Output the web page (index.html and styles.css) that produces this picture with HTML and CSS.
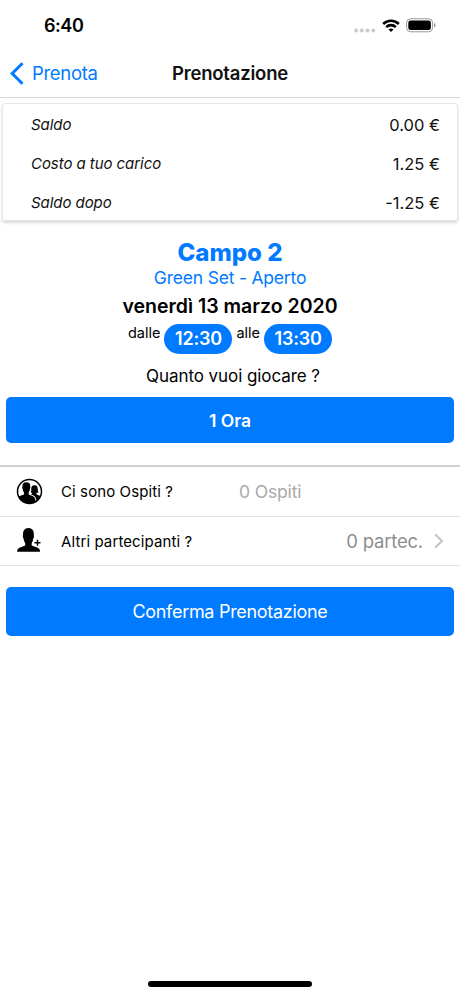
FILE: index.html
```html
<!DOCTYPE html>
<html lang="it">
<head>
<meta charset="utf-8">
<title>Prenotazione</title>
<link rel="stylesheet" href="styles.css">
</head>
<body>
<header class="status">
  <span class="clock">6:40</span>
  <div class="status-icons">
    <svg class="signal" width="22" height="5" viewBox="0 0 22 5" fill="#cbcbcb"><circle cx="2.1" cy="2.5" r="2"/><circle cx="7.8" cy="2.5" r="2"/><circle cx="13.5" cy="2.5" r="2"/><circle cx="19.2" cy="2.5" r="2"/></svg>
    <svg class="wifi" width="18" height="14" viewBox="0 0 18 14" fill="none" stroke="#000" stroke-width="2.6"><path d="M1.2 5C5.5.6 12.500.6 16.800 5"/><path d="M4.200 8.100C6.800 5.500 11.200 5.500 13.800 8.100"/><path d="M9 13L6.500 10.500Q9 8.400 11.500 10.500Z" fill="#000" stroke="none"/></svg>
    <svg class="battery" width="30" height="15" viewBox="0 0 30 15"><rect x=".6" y=".8" width="26" height="13" rx="4" fill="none" stroke="#999" stroke-width="1"/><rect x="2.300" y="2.500" width="22.600" height="9.600" rx="2.300"/><path d="M28 5v4.600q1.600-.6 1.600-2.300T28 5" fill="#999"/></svg>
  </div>
</header>
<nav class="nav">
  <a class="back"><svg width="14" height="23" viewBox="0 0 14 23" fill="none" stroke="#007aff" stroke-width="3"><path d="M12.500 1.200L2.200 11.500L12.500 21.800"/></svg><span class="back-text">Prenota</span></a>
  <h1 class="title">Prenotazione</h1>
</nav>
<main>
  <section class="card">
    <div class="line"><em>Saldo</em><span>0.00 €</span></div>
    <div class="line"><em>Costo a tuo carico</em><span>1.25 €</span></div>
    <div class="line"><em>Saldo dopo</em><span>-1.25 €</span></div>
  </section>
  <section class="summary">
    <h2 class="court">Campo 2</h2>
    <p class="surface">Green Set - Aperto</p>
    <p class="date">venerdì 13 marzo 2020</p>
    <div class="times"><span class="word">dalle</span><b class="pill">12:30</b><span class="word">alle</span><b class="pill">13:30</b></div>
    <p class="question">Quanto vuoi giocare ?</p>
  </section>
  <button class="btn duration">1 Ora</button>
  <section class="list">
    <div class="item">
      <svg class="icon" width="28" height="28" viewBox="0 0 28 28"><circle cx="14.500" cy="13.400" r="12" fill="#fff" stroke="#000" stroke-width="1.500"/><path d="M3.300 18.500Q6 17.300 9 16.400V14.500Q7.800 13.200 7.700 11Q6.900 9.800 7.400 8.500Q7.200 4.300 11.400 4.300Q15.500 4.300 15.200 8.500Q15.700 9.800 14.900 11.200Q14.700 13.200 13.700 14.500V16.400L18 18.200Q20.500 19.500 20.500 23.600Q14.500 27.500 8 23.900Q4.500 21.900 3.300 18.500Z"/><path d="M15.500 16.300Q17 16 17.200 14.900L15.600 14.400Q16.500 13.300 16.300 10.500Q16.500 7.100 19.400 7.200Q22.400 7 22.700 10.500Q22.700 13.300 23.600 14.400L21.400 14.900V16.200L25.400 18Q24 21.600 21.500 23.200Q21 18.900 18.500 17.600Z"/></svg>
      <span class="label">Ci sono Ospiti ?</span><span class="guests">0 Ospiti</span>
    </div>
    <div class="item second">
      <svg class="icon" width="28" height="28" viewBox="0 0 28 28"><path d="M2 24.700Q2 21.600 4.500 20.800L10.200 18.400V16.200Q8.800 14.500 8.600 11.800Q7.500 10.500 7.900 8.500Q7.400 1.300 13.400 1Q19.400 1.200 18.900 8.500Q19.300 10.500 18.200 11.800Q18 14.500 16.700 16.200V18.400L22.700 20.800Q25.200 21.700 25.200 24.700Z"/><path d="M22.500 12.800v6M19.500 15.800h6" stroke="#000" stroke-width="1.400"/></svg>
      <span class="label">Altri partecipanti ?</span><span class="partners">0 partec.</span>
      <svg class="chevron" width="10" height="16" viewBox="0 0 10 16" fill="none" stroke="#c4c4c6" stroke-width="2"><path d="M1.200 1.200L8 8L1.200 14.800"/></svg>
    </div>
  </section>
  <button class="btn confirm">Conferma Prenotazione</button>
</main>
<footer class="home"></footer>
</body>
</html>
```

FILE: styles.css
```css
* { box-sizing: border-box; }
body { margin: 0; width: 460px; height: 996px; background: #fff; color: #000; font-family: Inter, "Liberation Sans", sans-serif; display: flex; flex-direction: column; overflow: hidden; }
h1, h2, p { margin: 0; font-weight: 400; }
svg { display: block; flex: none; }
span, em, b, p, h1, h2 { white-space: nowrap; }
main { flex: 1; display: flex; flex-direction: column; }
.status { height: 49px; padding: 2px 23px 0 44px; display: flex; align-items: center; justify-content: space-between; }
.clock { font-size: 18px; font-weight: 600; letter-spacing: -.45px; }
.status-icons { display: flex; align-items: center; }
.signal { margin: 10px 6px 0 0; }
.wifi { margin-right: 6px; }
.battery { margin-right: 1px; }
.nav { height: 49px; border-bottom: 1px solid #d8d8d8; display: grid; grid-template-columns: 1fr auto 1fr; align-items: center; padding: 0 10px; }
.back { display: flex; align-items: center; gap: 8px; color: #007aff; }
.back-text { font-size: 18.500px; letter-spacing: -.3px; }
.title { font-size: 18.500px; font-weight: 600; color: #111; letter-spacing: -.2px; }
.card { margin: 5px 2px 0; height: 118px; padding: 1px 17px 0 28px; border: 1px solid #e5e5e5; border-radius: 3px; box-shadow: 0 2px 3px rgba(0,0,0,.15); font-size: 16.500px; color: #111; }
.line { height: 39px; display: flex; align-items: center; justify-content: space-between; }
.line em { font-size: 15px; letter-spacing: -.06px; padding-bottom: 1px; }
.summary { padding-top: 17px; display: flex; flex-direction: column; align-items: center; }
.court { height: 29px; line-height: 29px; font-size: 24px; font-weight: 800; color: #007aff; }
.surface { height: 23px; line-height: 21px; font-size: 17.500px; letter-spacing: -.2px; color: #007aff; }
.date { height: 34px; line-height: 33px; font-size: 19.500px; font-weight: 600; }
.times { height: 30px; display: flex; }
.word { font-size: 14.500px; line-height: 18px; }
.pill { width: 68px; height: 30px; line-height: 30px; margin: 0 4px; border-radius: 15px; background: #007aff; color: #fff; text-align: center; font-size: 18px; font-weight: 600; letter-spacing: -.2px; }
.times { margin-left: 4px; }
.question { height: 43px; line-height: 45px; font-size: 17px; letter-spacing: -.07px; padding-left: 6px; }
.btn { border: 0; padding: 0; margin: 0 6px; border-radius: 5px; background: #007aff; color: #fff; font-family: inherit; }
.duration { height: 46px; font-size: 17.500px; font-weight: 600; }
.list { margin-top: 22px; border-top: 2px solid #d0d0d0; }
.item { height: 50px; padding: 0 16px 0 15px; border-bottom: 1px solid #e2e2e2; display: flex; align-items: center; }
.second { height: 49px; }
.label { width: 178px; margin-left: 18px; font-size: 15px; letter-spacing: .1px; }
.guests { font-size: 17.500px; letter-spacing: -.15px; color: #a9a9a9; }
.partners { margin-left: auto; font-size: 18.500px; letter-spacing: -.2px; color: #8e8e8e; }
.chevron { margin-left: 11px; }
.confirm { margin-top: 21px; height: 49px; font-size: 18px; letter-spacing: -.3px; }
.home { width: 164px; height: 6px; margin: 0 auto 9px; border-radius: 3px; background: #000; }
```
